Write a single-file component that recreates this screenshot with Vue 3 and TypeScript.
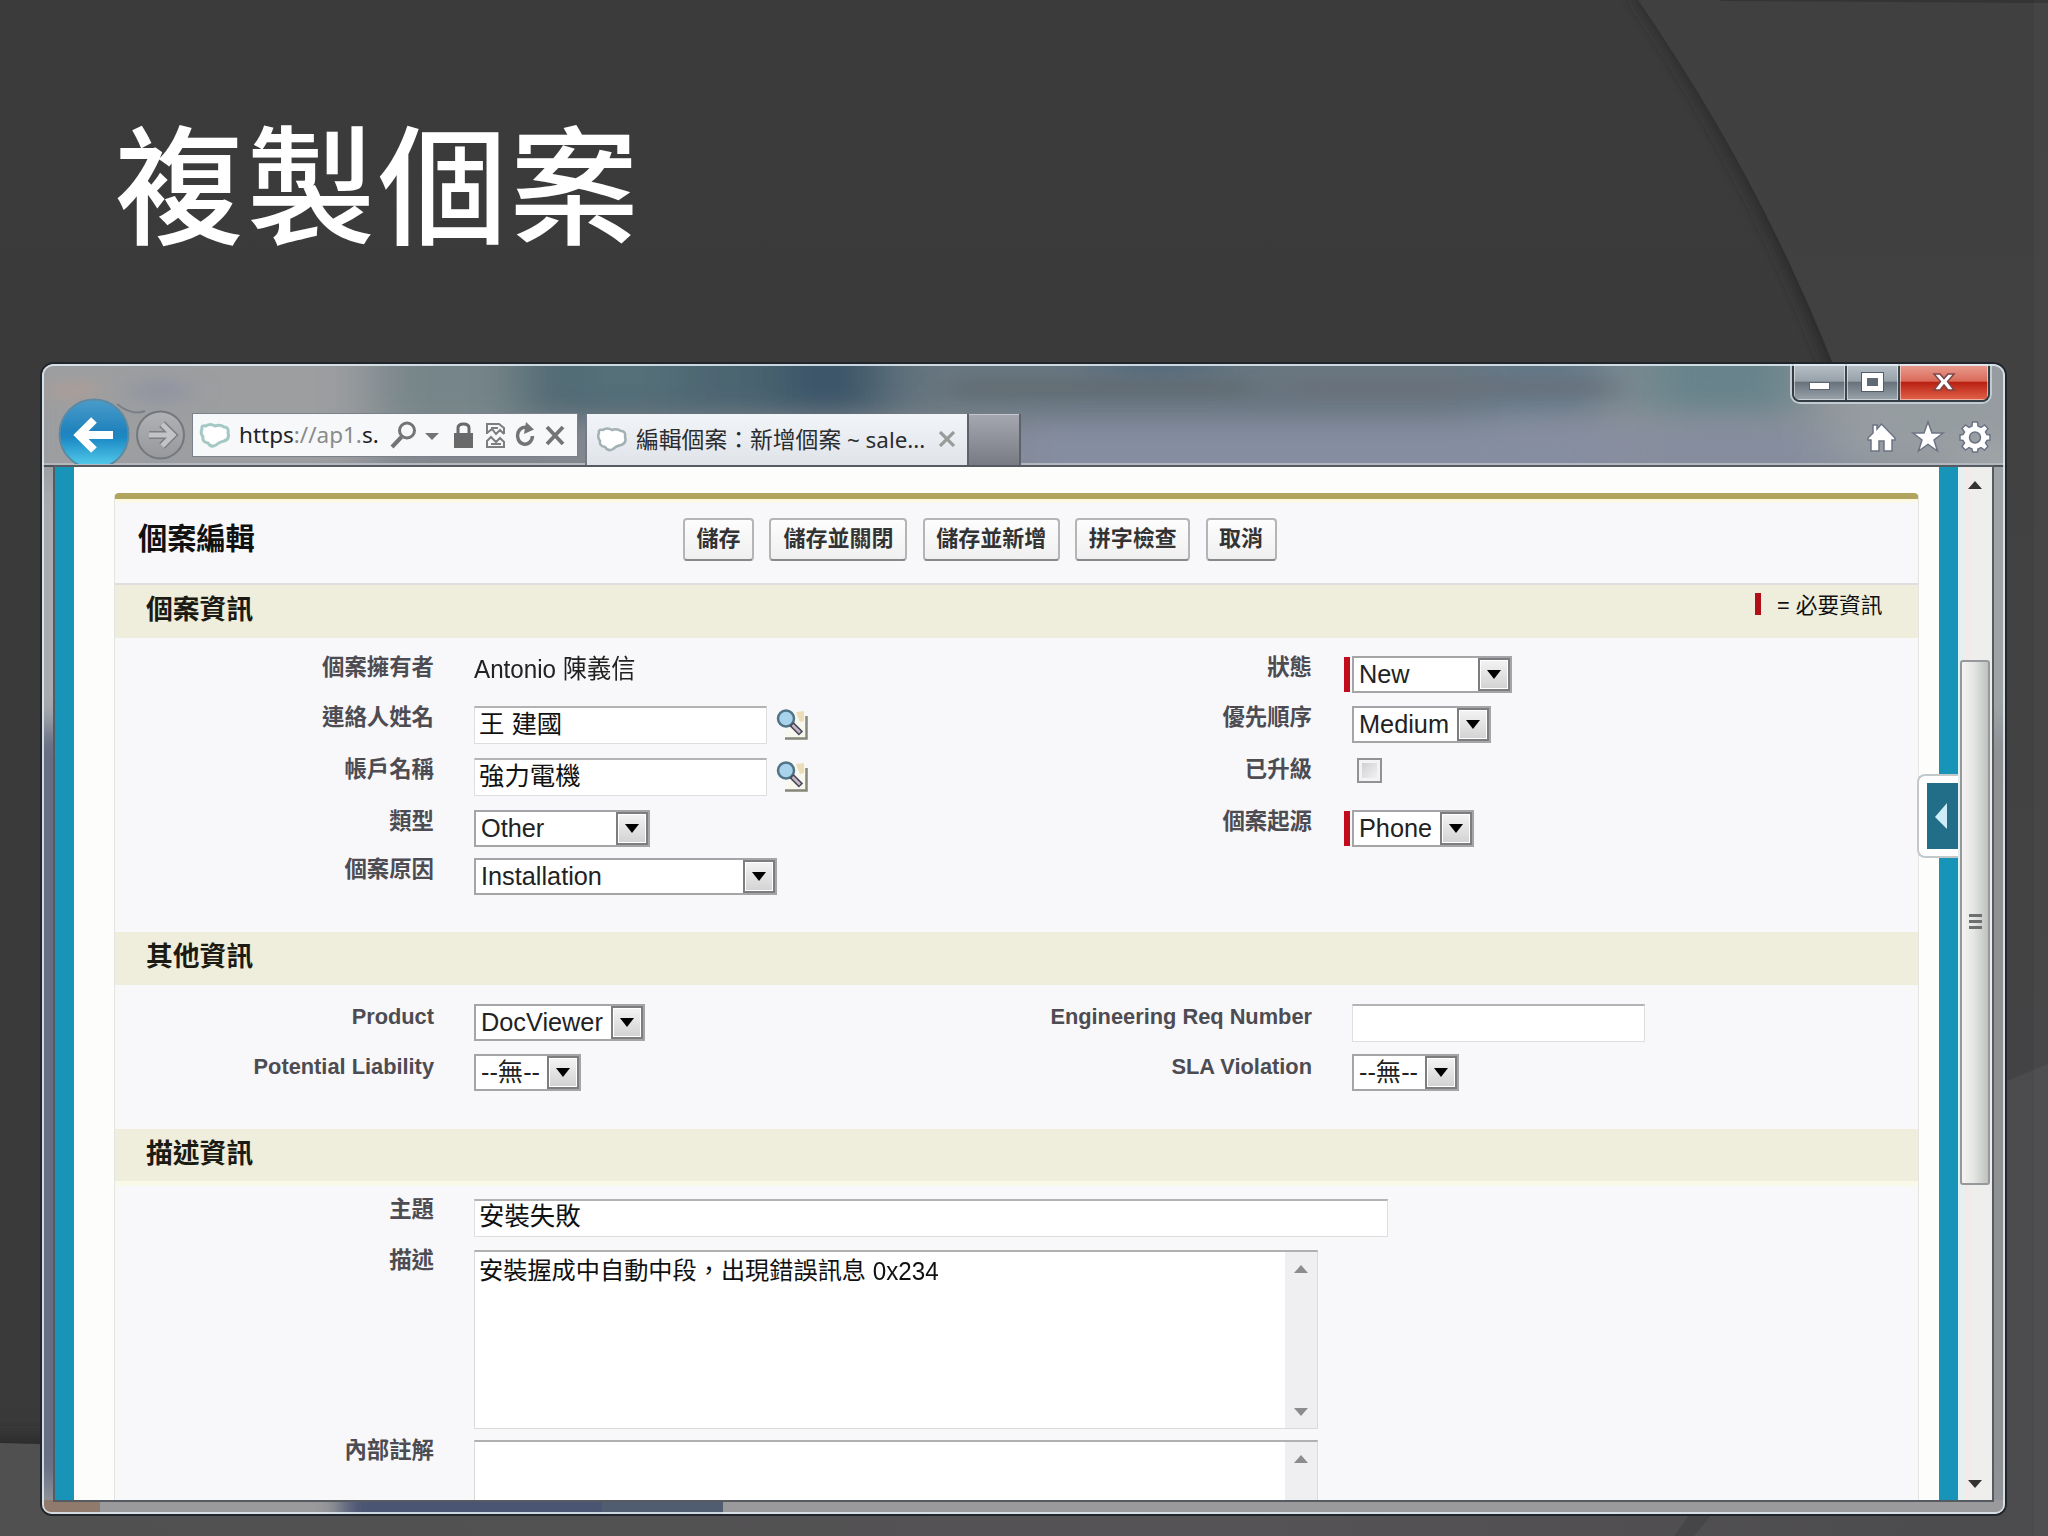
<script setup lang="ts">
interface Field {
  label: string
  kind: 'text' | 'input' | 'lookup' | 'select' | 'checkbox' | 'none'
  value?: string
  width?: number
  required?: boolean
}
interface Row {
  height: number
  left: Field
  right: Field
}

const buttons = [
  { label: '儲存', width: 71 },
  { label: '儲存並關閉', width: 138 },
  { label: '儲存並新增', width: 137 },
  { label: '拼字檢查', width: 115 },
  { label: '取消', width: 71 },
]

const sections: { title: string; legend: boolean; latin: boolean; rows: Row[] }[] = [
  {
    title: '個案資訊',
    legend: true,
    latin: false,
    rows: [
      {
        height: 50,
        left: { label: '個案擁有者', kind: 'text', value: 'Antonio 陳義信' },
        right: { label: '狀態', kind: 'select', value: 'New', width: 160, required: true },
      },
      {
        height: 52,
        left: { label: '連絡人姓名', kind: 'lookup', value: '王 建國', width: 293 },
        right: { label: '優先順序', kind: 'select', value: 'Medium', width: 139 },
      },
      {
        height: 52,
        left: { label: '帳戶名稱', kind: 'lookup', value: '強力電機', width: 293 },
        right: { label: '已升級', kind: 'checkbox' },
      },
      {
        height: 48,
        left: { label: '類型', kind: 'select', value: 'Other', width: 176 },
        right: { label: '個案起源', kind: 'select', value: 'Phone', width: 122, required: true },
      },
      {
        height: 72,
        left: { label: '個案原因', kind: 'select', value: 'Installation', width: 303 },
        right: { label: '', kind: 'none' },
      },
    ],
  },
  {
    title: '其他資訊',
    legend: false,
    latin: true,
    rows: [
      {
        height: 50,
        left: { label: 'Product', kind: 'select', value: 'DocViewer', width: 171 },
        right: { label: 'Engineering Req Number', kind: 'input', value: '', width: 293 },
      },
      {
        height: 74,
        left: { label: 'Potential Liability', kind: 'select', value: '--無--', width: 107 },
        right: { label: 'SLA Violation', kind: 'select', value: '--無--', width: 107 },
      },
    ],
  },
]
</script>

<template>
  <div class="slide">
    <svg class="backdrop" viewBox="0 0 2048 1536" preserveAspectRatio="none">
      <defs>
        <linearGradient id="base" x1="0" y1="0" x2="0" y2="1">
          <stop offset="0" stop-color="#3b3b3b" />
          <stop offset="1" stop-color="#393939" />
        </linearGradient>
        <linearGradient id="side" x1="0" y1="0" x2="0" y2="1">
          <stop offset="0" stop-color="#404040" />
          <stop offset="1" stop-color="#454446" />
        </linearGradient>
        <linearGradient id="floor" x1="0" y1="0" x2="1" y2="0">
          <stop offset="0" stop-color="#505050" />
          <stop offset=".6" stop-color="#555355" />
          <stop offset="1" stop-color="#4b4a4c" />
        </linearGradient>
        <filter id="soft" x="-20%" y="-20%" width="140%" height="140%"><feGaussianBlur stdDeviation="7" /></filter>
        <filter id="soft2" x="-50%" y="-100%" width="200%" height="300%"><feGaussianBlur stdDeviation="6" /></filter>
      </defs>
      <rect width="2048" height="1536" fill="url(#base)" />
      <path d="M1636 -10Q1757 170 1833 366L1900 600H2100V-10Z" fill="#2b2b2b" filter="url(#soft)" transform="translate(-5 2)" />
      <path d="M1638 0Q1757 172 1833 364Q1860 440 1880 540V1536H2048V0Z" fill="url(#side)" />
      <path d="M1720 0H2048V3L1720 1Z" fill="#343434" />
      <rect x="-20" y="1434" width="100" height="20" fill="#2e2e2e" filter="url(#soft2)" />
      <path d="M0 1443Q50 1444 110 1447V1490H1900V1140L2005 1082L2048 1064V1536H0Z" fill="url(#floor)" />
      <path d="M1690 1514L1674 1536H1694L1712 1514Z" fill="#464547" />
      <rect x="2034" width="14" height="1536" fill="#fff" opacity=".025" />
    </svg>

    <h1 class="title">複製個案</h1>

    <section class="window">
      <svg class="glass" viewBox="0 0 1963 1150" preserveAspectRatio="none">
        <defs>
          <filter id="haze" x="-50%" y="-80%" width="200%" height="260%"><feGaussianBlur stdDeviation="28 14" /></filter>
          <filter id="haze2" x="-50%" y="-80%" width="200%" height="260%"><feGaussianBlur stdDeviation="18 8" /></filter>
          <filter id="haze3" x="-20%" y="-20%" width="140%" height="140%"><feGaussianBlur stdDeviation="12 0" /></filter>
        </defs>
        <rect width="1963" height="1150" fill="#909498" />
        <g filter="url(#haze)">
          <rect x="-40" y="-30" width="370" height="150" fill="#9c9ea0" />
          <rect x="330" y="-30" width="170" height="90" fill="#768589" />
          <rect x="480" y="-30" width="380" height="86" fill="#4c6571" />
          <rect x="520" y="-20" width="120" height="60" fill="#547078" />
          <rect x="740" y="-30" width="90" height="80" fill="#3a5469" />
          <rect x="850" y="-30" width="600" height="86" fill="#677680" />
          <rect x="1060" y="-30" width="110" height="40" fill="#4d687d" />
          <rect x="1440" y="-30" width="130" height="80" fill="#647887" />
          <rect x="1600" y="-30" width="160" height="80" fill="#68838b" />
          <rect x="330" y="62" width="640" height="60" fill="#82868e" />
          <rect x="970" y="58" width="610" height="70" fill="#858da1" />
          <rect x="1590" y="58" width="260" height="66" fill="#858d9e" />
          <rect x="1790" y="-30" width="200" height="130" fill="#969da1" />
          <rect x="-20" y="120" width="60" height="240" fill="#b0b4b8" />
          <rect x="-20" y="360" width="60" height="760" fill="#56617d" />
          <rect x="1930" y="80" width="60" height="280" fill="#a4a9ac" />
          <rect x="1930" y="380" width="60" height="740" fill="#8f9092" />
        </g>
        <g filter="url(#haze2)">
          <ellipse cx="32" cy="27" rx="18" ry="9" fill="#b79c92" />
          <ellipse cx="118" cy="27" rx="22" ry="10" fill="#8b8da2" />
          <rect x="910" y="18" width="300" height="12" fill="#5f676d" />
          <rect x="1240" y="16" width="330" height="14" fill="#69707a" />
        </g>
        <rect y="1136" width="1963" height="14" fill="#9a9a9c" />
        <rect y="1136" width="58" height="14" fill="#8f7a6c" />
        <rect x="300" y="1136" width="340" height="14" fill="#485572" filter="url(#haze3)" />
        <rect x="560" y="1136" width="121" height="14" fill="#505d70" />
      </svg>

      <header class="chrome">
        <svg class="nav" width="150" height="100" viewBox="0 0 150 100">
          <defs>
            <linearGradient id="back" x1="0" y1="0" x2="0" y2="1">
              <stop offset="0" stop-color="#4a9cca" />
              <stop offset=".45" stop-color="#2183bd" />
              <stop offset=".55" stop-color="#1b88c4" />
              <stop offset="1" stop-color="#58d2ee" />
            </linearGradient>
            <linearGradient id="fwd" x1="0" y1="0" x2="0" y2="1">
              <stop offset="0" stop-color="#b0b2b5" />
              <stop offset="1" stop-color="#96989c" />
            </linearGradient>
          </defs>
          <path d="M75 40Q90 52 103 47" fill="none" stroke="#7b8087" stroke-width="2" />
          <circle cx="52" cy="70" r="34.5" fill="url(#back)" stroke="#5d89a3" stroke-width="2" />
          <path d="M71 71H36M52 56L37 71L52 86" fill="none" stroke="#fff" stroke-width="8" />
          <circle cx="118.500" cy="71" r="23.500" fill="url(#fwd)" stroke="#74777c" stroke-width="2" />
          <path d="M107 71H130M120 60L131 71L120 82" fill="none" stroke="#7b7e82" stroke-width="8" />
          <path d="M107 71H130M120 60L131 71L120 82" fill="none" stroke="#c1c3c6" stroke-width="5" />
        </svg>
        <div class="address">
          <svg class="cloud" width="32" height="26" viewBox="0 0 32 26">
            <path d="M3 7Q2 3 7 4Q11 1 16 4Q21 2 25 5Q30 5 29 11Q31 17 25 19Q20 20 17 23Q12 26 9 21Q3 20 4 15Q1 11 3 7Z" fill="#fff" stroke="#a4c9c4" stroke-width="3" />
          </svg>
          <span class="url"><b>https</b>://ap1.<b>s.</b></span>
          <svg class="tools" width="190" height="34" viewBox="0 0 190 34">
            <g fill="none" stroke="#747474">
              <circle cx="19" cy="12.500" r="7.500" stroke-width="3" />
              <path d="M13.500 19L4 29" stroke-width="4" />
            </g>
            <path d="M37 15H51L44 22Z" fill="#747474" />
            <path d="M66 15H85V30H66Z" fill="#6a6a6a" />
            <path d="M70 16V10Q70 6 75.500 6Q81 6 81 10V16" fill="none" stroke="#6a6a6a" stroke-width="3" />
            <path d="M99 16V6H111L116 10V16M103 10H110M99 15L104 11L108 16L112 12L116 16M99 29V23L103 19L108 24L112 20L116 24V29ZM103 26H113" fill="none" stroke="#7e7e7e" stroke-width="2" />
            <path d="M141 10.500A7.500 8.500 0 1 0 144.500 18" fill="none" stroke="#747474" stroke-width="3.500" />
            <path d="M138 4L146 11.500L136 16Z" fill="#747474" />
            <path d="M159 9L175 26M175 9L159 26" stroke="#747474" stroke-width="3.800" />
          </svg>
        </div>
        <div class="tab">
          <svg class="cloud" width="32" height="28" viewBox="0 0 32 28">
            <path d="M3 8Q2 4 7 5Q11 2 16 5Q21 3 25 6Q30 6 29 12Q31 18 25 20Q20 21 17 24Q12 27 9 22Q3 21 4 16Q1 12 3 8Z" fill="#fff" stroke="#a3b0b4" stroke-width="2.500" />
          </svg>
          <span class="tab-title"><span class="tab-cjk">編輯個案：新增個案</span> ~ sale...</span>
          <svg class="tab-close" width="16" height="16" viewBox="0 0 16 16"><path d="M1 1L15 15M15 1L1 15" stroke="#9a9a9a" stroke-width="3.200" /></svg>
        </div>
        <div class="newtab"></div>
        <div class="corner">
          <div class="controls">
            <span class="ctl min"><i></i></span>
            <span class="ctl max"><i></i></span>
            <span class="ctl close">
              <svg width="24" height="20" viewBox="0 0 24 20"><path d="M2 2H8L12 6.500L16 2H22L15.500 9.500L22 18H16L12 13L8 18H2L8.500 9.500Z" fill="#fff" stroke="#7b4648" stroke-width="1.500" /></svg>
            </span>
          </div>
          <svg class="cmds" width="128" height="34" viewBox="0 0 128 34">
            <g fill="#fff" stroke="#6c7384" stroke-width="1.500">
              <path d="M2 18L7 13V5H11V9L15.500 4L29 18V20H26V31H18V21H13V31H5V20H2Z" />
              <path d="M62 2L66 13H77L68 20L71.500 31L62 24.500L52.500 31L56 20L47 13H58Z" />
              <path fill-rule="evenodd" d="M106.500 2H111.500L112 6L115 7.500L118.500 5L122 8.500L119.500 12L121 14.500L124 15V20L121 20.500L119.500 23L122 26.500L118.500 30L115 27.500L112 29L111.500 32H106.500L106 29L103 27.500L99.500 30L96 26.500L98.500 23L97 20.500L94 20V15L97 14.500L98.500 12L96 8.500L99.500 5L103 7.500L106 6ZM109 12A5.500 5.500 0 1 0 109 23A5.500 5.500 0 1 0 109 12Z" />
            </g>
          </svg>
        </div>
      </header>

      <div class="viewport">
        <div class="stripe"></div>
        <main class="page">
          <div class="panel">
            <div class="panel-head">
              <h2>個案編輯</h2>
              <div class="buttons">
                <button v-for="b in buttons" :key="b.label" :style="{ width: b.width + 'px' }">{{ b.label }}</button>
              </div>
            </div>

            <section v-for="s in sections" :key="s.title" class="block" :class="{ latin: s.latin }">
              <div class="bar">
                <h3>{{ s.title }}</h3>
                <div v-if="s.legend" class="legend"><i></i><span>= 必要資訊</span></div>
              </div>
              <div class="rows">
                <div v-for="r in s.rows" :key="r.left.label" class="row" :style="{ height: r.height + 'px' }">
                  <template v-for="f in [r.left, r.right]" :key="f.label">
                    <label>{{ f.label }}</label>
                    <div class="cell">
                      <i v-if="f.required" class="req"></i>
                      <span v-if="f.kind === 'text'" class="plain">{{ f.value }}</span>
                      <div v-else-if="f.kind === 'input' || f.kind === 'lookup'" class="input" :style="{ width: f.width + 'px' }">{{ f.value }}</div>
                      <div v-else-if="f.kind === 'select'" class="select" :style="{ width: f.width + 'px' }">
                        <span>{{ f.value }}</span>
                        <b><svg width="14" height="9" viewBox="0 0 14 9"><path d="M0 0H14L7 9Z" fill="#000" /></svg></b>
                      </div>
                      <span v-else-if="f.kind === 'checkbox'" class="check"></span>
                      <svg v-if="f.kind === 'lookup'" class="lookup" width="34" height="34" viewBox="0 0 34 34">
                        <path d="M9 6H29V30H9Z" fill="#f8f8ee" />
                        <path d="M9 30.500H30.500V8" fill="none" stroke="#85877a" stroke-width="2.500" />
                        <path d="M20 4L28 3V13L24 14Z" fill="#ecdcb8" />
                        <ellipse cx="10" cy="10.500" rx="8" ry="8" fill="#a9d2ec" stroke="#4f7486" stroke-width="2.500" />
                        <path d="M15.500 16L25 25.500" stroke="#48485a" stroke-width="6" />
                        <path d="M16.500 17L24 24.500" stroke="#c9b9c6" stroke-width="2.500" />
                      </svg>
                    </div>
                  </template>
                </div>
              </div>
            </section>

            <section class="block">
              <div class="bar last"><h3>描述資訊</h3></div>
              <div class="rows describe">
                <div class="row subject">
                  <label>主題</label>
                  <div class="cell"><div class="input long">安裝失敗</div></div>
                </div>
                <div class="row desc">
                  <label>描述</label>
                  <div class="cell">
                    <div class="area">
                      <p>安裝握成中自動中段，出現錯誤訊息 <span>0x234</span></p>
                      <div class="area-bar"><i class="up"></i><i class="down"></i></div>
                    </div>
                  </div>
                </div>
                <div class="row desc">
                  <label>內部註解</label>
                  <div class="cell">
                    <div class="area">
                      <p></p>
                      <div class="area-bar"><i class="up"></i><i class="down"></i></div>
                    </div>
                  </div>
                </div>
              </div>
            </section>
          </div>
          <div class="drawer"><div><svg width="12" height="26" viewBox="0 0 12 26"><path d="M12 0V26L0 14Z" fill="#cdeef8" /></svg></div></div>
        </main>
        <div class="stripe"></div>
        <div class="scroll">
          <i class="up"></i>
          <div class="thumb"><i></i><i></i><i></i></div>
          <i class="down"></i>
        </div>
      </div>
    </section>
  </div>
</template>

<style>
body {
  margin: 0;
  overflow: hidden;
}
</style>

<style scoped>
* {
  box-sizing: border-box;
}
.slide {
  position: relative;
  width: 2048px;
  height: 1536px;
  overflow: hidden;
  font-family: 'Liberation Sans', 'Noto Sans CJK TC', sans-serif;
}
.backdrop,
.glass {
  position: absolute;
  inset: 0;
  width: 100%;
  height: 100%;
}
.title {
  position: relative;
  margin: 0;
  height: 364px;
  padding: 84px 0 0 115px;
  font: 500 129px/190px 'Noto Sans CJK TC', sans-serif;
  letter-spacing: 2.5px;
  color: #fff;
}
.window {
  position: relative;
  width: 1963px;
  height: 1150px;
  margin-left: 42px;
  border-radius: 12px 12px 10px 10px;
  overflow: hidden;
  box-shadow: 0 0 0 2px #20262c;
}
.window::after {
  content: '';
  position: absolute;
  inset: 0;
  border: 2px solid rgba(225, 235, 242, 0.85);
  border-radius: 11px 11px 9px 9px;
  pointer-events: none;
}
.chrome {
  position: relative;
  display: flex;
  height: 103px;
  align-items: flex-start;
  border-bottom: 2px solid #4f5358;
  box-shadow: inset 0 -2px 0 #b3b8be;
}
.nav {
  flex: none;
}
.address {
  display: flex;
  align-items: center;
  width: 386px;
  height: 44px;
  margin: 49px 9px 0 0;
  padding-left: 6px;
  background: #f6f8fa;
  border: 1px solid #7b818a;
  flex: none;
}
.cloud {
  flex: none;
}
.url {
  width: 157px;
  padding-left: 8px;
  font: 22.5px/40px 'Noto Sans', sans-serif;
  color: #8a8a8a;
  white-space: nowrap;
  flex: none;
}
.url b {
  font-weight: 400;
  color: #222;
}
.tools {
  flex: none;
}
.tab {
  display: flex;
  width: 380px;
  height: 52px;
  margin-top: 50px;
  padding-left: 9px;
  background: linear-gradient(#f2f5f8, #dfe3e8);
  box-shadow: -2px 0 0 #747a85;
  flex: none;
}
.tab .cloud {
  margin-top: 11px;
}
.tab-title {
  width: 311px;
  padding-left: 8px;
  font: 22.4px/50px 'Noto Sans', 'Noto Sans CJK TC', sans-serif;
  color: #2a2c30;
  white-space: nowrap;
  flex: none;
}
.tab-cjk {
  font: 22.8px/50px 'Noto Sans CJK TC', sans-serif;
}
.tab-close {
  margin-top: 17px;
  flex: none;
}
.newtab {
  width: 54px;
  height: 52px;
  margin-top: 50px;
  background: linear-gradient(#a5a8b0, #777a83);
  border: 2px solid #5d626c;
  border-width: 0 2px;
  box-shadow: inset 0 1px 0 #c4c8ce;
  flex: none;
}
.corner {
  margin-left: auto;
  margin-right: 11px;
}
.controls {
  display: flex;
  width: 198px;
  height: 38px;
  margin-left: 2px;
  border: 2px solid #343c44;
  border-top: 0;
  border-radius: 0 0 8px 8px;
  box-shadow: 0 0 0 2px #c1ccd2;
  overflow: hidden;
}
.ctl {
  display: flex;
  align-items: center;
  justify-content: center;
  width: 53px;
  background: linear-gradient(#b9c2c9, #97a1a9 48%, #66717b 50%, #9aa4ac);
  border-right: 2px solid #3d454d;
  box-shadow: inset 0 0 0 1px rgba(255, 255, 255, 0.5);
}
.ctl.close {
  flex: 1;
  border: 0;
  background: linear-gradient(#e9a093, #da6a59 48%, #b81f10 50%, #e2634b);
}
.min i {
  width: 21px;
  height: 8px;
  margin-top: 8px;
  background: #fff;
  border: 1px solid #5d6570;
}
.max i {
  width: 21px;
  height: 18px;
  background: #5f6a75;
  border: 5px solid #fff;
  outline: 1.5px solid #545c68;
}
.cmds {
  display: block;
  margin: 18px 0 0 76px;
}
.viewport {
  position: relative;
  display: flex;
  width: 1937px;
  height: 1033px;
  margin-left: 13px;
  background: #fff;
  outline: 2px solid #565b62;
  overflow: hidden;
}
.stripe {
  width: 19px;
  background: #1994b9;
  flex: none;
}
.page {
  position: relative;
  width: 1865px;
  background: #fdfefc;
  flex: none;
}
.panel {
  width: 1805px;
  height: 1100px;
  margin: 26px 0 0 40px;
  background: #f8f7f9;
  border: 1px solid #e4e4e0;
  border-top: 6px solid #b1a45f;
  border-radius: 5px 5px 0 0;
}
.panel-head {
  display: flex;
  height: 86px;
  padding-left: 23px;
  border-bottom: 2px solid #dedede;
  box-shadow: inset 0 4px 2px -1px #fdf9df;
}
h2,
h3 {
  margin: 0;
  font-family: 'Noto Sans CJK TC', sans-serif;
  font-weight: 700;
}
h2 {
  width: 545px;
  font-size: 29.2px;
  line-height: 74px;
  color: #111;
}
.buttons {
  display: flex;
  gap: 15.4px;
  padding-top: 19px;
}
button {
  height: 43px;
  padding: 0 0 7px;
  font: 700 22px/30px 'Noto Sans CJK TC', sans-serif;
  color: #333;
  white-space: nowrap;
  background: linear-gradient(#fdfdfd, #f0f0f1);
  border: 2px solid #b5b5b7;
  border-bottom-color: #88888b;
  border-radius: 4px;
}
.bar {
  display: flex;
  justify-content: space-between;
  height: 53px;
  padding-left: 31px;
  background: #efeedc;
  flex: none;
}
h3 {
  font-size: 26.8px;
  line-height: 46px;
  color: #1b1b14;
}
.legend {
  display: flex;
  width: 163px;
  height: 40px;
  align-items: center;
}
.legend i {
  width: 6px;
  height: 22px;
  margin-right: 16px;
  margin-bottom: 2px;
  background: #b00f17;
}
.legend span {
  margin-bottom: 4px;
  font-size: 21.7px;
  color: #111;
}
.rows {
  padding-top: 20px;
}
.row {
  display: grid;
  grid-template-columns: 319px 559px 319px 1fr;
  align-items: start;
}
label {
  font: 700 22.4px/20px 'Liberation Sans', 'Noto Sans CJK TC', sans-serif;
  color: #4c4c52;
  text-align: right;
}
.latin label {
  font-size: 21.8px;
  line-height: 24px;
}
.cell {
  position: relative;
  display: flex;
  margin-top: -2px;
  padding-left: 40px;
}
.latin .cell {
  margin-top: -1px;
}
.req {
  width: 6px;
  height: 35px;
  margin: 1px 2px 0 -8px;
  background: #c00c1c;
}
.plain {
  margin-top: 1px;
  font-size: 24.2px;
  line-height: 24px;
  color: #222;
  transform: scaleY(1.07);
  white-space: pre;
}
.input {
  height: 38px;
  padding-left: 4px;
  font-size: 25.4px;
  line-height: 33px;
  color: #111;
  background: #fff;
  border: 1px solid #dededf;
  border-top: 2px solid #b3b3b3;
}
.lookup {
  margin: 2px 0 0 9px;
}
.select {
  display: flex;
  height: 37px;
  background: #fff;
  border: 2px solid #a5a5a7;
}
.select span {
  flex: 1;
  padding-left: 5px;
  font-size: 25.3px;
  line-height: 33px;
  color: #222;
  white-space: nowrap;
}
.select b {
  display: flex;
  align-items: center;
  justify-content: center;
  width: 32px;
  background: linear-gradient(#f4f4f4, #d2d2d3);
  border: 2px solid #7d7d80;
  box-shadow: inset 0 0 0 1px #fff;
  flex: none;
}
.check {
  width: 25px;
  height: 25px;
  margin-left: 5px;
  background: linear-gradient(135deg, #c9c9cd, #f8f8f8);
  border: 2px solid #929294;
  box-shadow: inset 0 0 0 3px #f3f3f3;
}
.bar.last {
  height: 52px;
  box-shadow: 0 5px 0 #f9f9ea;
}
.describe {
  padding-top: 19px;
}
.describe .row {
  grid-template-columns: 319px 1fr;
}
.describe .cell {
  margin-top: -1px;
}
.subject {
  height: 51px;
}
.desc {
  height: 190px;
}
.input.long {
  width: 914px;
  height: 38px;
  line-height: 30px;
}
.area {
  display: flex;
  width: 844px;
  height: 179px;
  background: #fff;
  border: 1px solid #dadadb;
  border-top: 2px solid #b0b0b0;
}
.area p {
  flex: 1;
  margin: 0;
  padding: 4px 0 0 4px;
  font-size: 24.2px;
  line-height: 30px;
  color: #111;
}
.area p span {
  display: inline-block;
  transform: scaleY(1.1);
}
.area-bar {
  display: flex;
  flex-direction: column;
  justify-content: space-between;
  align-items: center;
  width: 32px;
  padding: 13px 0 12px;
  background: #efeef0;
}
.up,
.down {
  border: 7px solid transparent;
  border-top: 0;
  border-bottom: 8px solid #8c8c8c;
}
.down {
  border-bottom: 0;
  border-top: 8px solid #8c8c8c;
}
.drawer {
  position: absolute;
  top: 307px;
  left: 1843px;
  width: 41px;
  height: 84px;
  padding: 7px 0 7px 8px;
  background: #fff;
  border: 2px solid #c3c8ca;
  border-right: 0;
  border-radius: 8px 0 0 8px;
  z-index: 2;
}
.drawer div {
  display: flex;
  height: 100%;
  align-items: center;
  padding-left: 8px;
  background: #226e88;
}
.scroll {
  display: flex;
  flex-direction: column;
  align-items: center;
  width: 34px;
  padding: 14px 0 12px;
  background: linear-gradient(90deg, #e4f1f2 0 5px, #f5e9e6 8px, #eeefed 14px);
}
.scroll .up {
  border-bottom-color: #333;
  margin-bottom: 171px;
}
.scroll .down {
  border-top-color: #333;
  margin-top: auto;
}
.thumb {
  display: flex;
  flex-direction: column;
  align-items: center;
  justify-content: center;
  gap: 3px;
  width: 30px;
  height: 525px;
  padding-bottom: 2px;
  background: linear-gradient(90deg, #f6f3f3, #e4e6e4 45%, #bfc1bf);
  border: 2px solid #96999c;
  border-radius: 3px;
}
.thumb i {
  width: 13px;
  height: 3px;
  background: #6c6f70;
}
</style>
